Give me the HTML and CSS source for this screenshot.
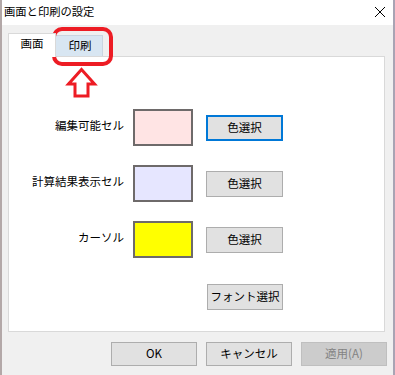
FILE: index.html
```html
<!DOCTYPE html>
<html lang="ja">
<head>
<meta charset="utf-8">
<link rel="stylesheet" href="styles.css">
</head>
<body>
<div class="window">
  <div class="titlebar">
    <span class="title">画面と印刷の設定</span>
    <svg class="close" width="12" height="12" viewBox="0 0 12 12"><path d="M1 1 L11 11 M11 1 L1 11" stroke="#000" stroke-width="1" fill="none"/></svg>
  </div>
  <div class="content">
    <div class="tabs">
      <div class="tab active">画面</div>
      <div class="tab inactive">印刷</div>
    </div>
    <div class="panel">
      <div class="rows">
        <div class="row">
          <div class="label">編集可能セル</div>
          <div class="swatch pink"></div>
          <button class="btn pick focused">色選択</button>
        </div>
        <div class="row">
          <div class="label">計算結果表示セル</div>
          <div class="swatch lavender"></div>
          <button class="btn pick">色選択</button>
        </div>
        <div class="row">
          <div class="label">カーソル</div>
          <div class="swatch yellow"></div>
          <button class="btn pick">色選択</button>
        </div>
      </div>
      <div class="font-row">
        <button class="btn font">フォント選択</button>
      </div>
    </div>
    <div class="actions">
      <button class="btn action">OK</button>
      <button class="btn action">キャンセル</button>
      <button class="btn action disabled">適用(A)</button>
    </div>
  </div>
  <svg class="annot" width="395" height="375" viewBox="0 0 395 375">
    <rect x="54" y="29" width="57" height="35" rx="8" ry="8" fill="none" stroke="#ed1c24" stroke-width="4"/>
    <polygon points="81.5,69.5 94.5,84 88,84 88,96 75,96 75,84 68.5,84" fill="none" stroke="#ed1c24" stroke-width="3" stroke-linejoin="miter"/>
  </svg>
</div>
</body>
</html>
```
FILE: styles.css
```css
html, body {
  margin: 0;
  padding: 0;
  background: #ffffff;
}
body {
  font-family: "Noto Sans CJK JP", "Noto Sans", sans-serif;
  font-size: 11.5px;
  color: #000;
}
.window {
  position: relative;
  width: 395px;
  height: 375px;
  box-sizing: border-box;
  background: #f0f0f0;
  border-left: 2px solid #b3a8a8;
  border-right: 2px solid #a9a4b4;
  display: flex;
  flex-direction: column;
  overflow: hidden;
}
.titlebar {
  height: 25px;
  background: #ffffff;
  display: flex;
  align-items: center;
  justify-content: space-between;
  padding: 0 7px 0 2px;
}
.title {
  font-size: 11.3px;
  line-height: 1;
  margin-top: -2px;
}
.close {
  margin-top: -1px;
}
.content {
  flex: 1;
  display: flex;
  flex-direction: column;
  padding: 8px 6px 9px 6px;
}
.tabs {
  display: flex;
  align-items: flex-end;
  height: 23px;
}
.tab {
  box-sizing: border-box;
  display: flex;
  align-items: center;
  justify-content: center;
  line-height: 1;
}
.tab.active {
  position: relative;
  z-index: 1;
  width: 48px;
  height: 24px;
  margin-bottom: -1px;
  background: #ffffff;
  border: 1px solid #d9d9d9;
  border-bottom: none;
  padding-bottom: 3px;
}
.tab.inactive {
  width: 47px;
  height: 21px;
  background: #d8e6f2;
  border-top: 1px solid #c9d5e0;
  border-right: 1px solid #c9d5e0;
  padding-left: 2px;
}
.panel {
  height: 276px;
  box-sizing: border-box;
  background: #ffffff;
  border: 1px solid #d9d9d9;
  width: 377px;
  padding-top: 52px;
  display: flex;
  flex-direction: column;
}
.rows {
  display: flex;
  flex-direction: column;
  gap: 19px;
}
.row {
  display: flex;
  align-items: center;
  height: 37px;
}
.label {
  width: 115px;
  text-align: right;
  line-height: 1;
  margin-top: -3px;
}
.swatch {
  margin-left: 9px;
  width: 60px;
  height: 37px;
  box-sizing: border-box;
  border: 2px solid #6e6a6a;
}
.pink { background: #ffe4e4; }
.lavender { background: #e6e6ff; }
.yellow { background: #ffff00; }
.btn {
  font-family: "Noto Sans CJK JP", "Noto Sans", sans-serif;
  font-size: 11.5px;
  color: #000;
  background: #e1e1e1;
  border: 1px solid #adadad;
  box-sizing: border-box;
  padding: 0;
  margin: 0;
  line-height: 1;
  display: flex;
  align-items: center;
  justify-content: center;
}
.pick {
  margin-left: 13px;
  width: 77px;
  height: 26px;
}
.focused {
  border: 2px solid #0078d7;
}
.font-row {
  margin-top: 26px;
  padding-left: 198px;
  display: flex;
}
.font {
  width: 76px;
  height: 26px;
}
.actions {
  margin-top: 10px;
  display: flex;
  justify-content: flex-end;
  gap: 9px;
  padding-right: 0;
}
.action {
  width: 86px;
  height: 24px;
}
.action.disabled {
  background: #cccccc;
  border-color: #bfbfbf;
  color: #838383;
}
.annot {
  position: absolute;
  left: -2px;
  top: 0;
  pointer-events: none;
}
```
